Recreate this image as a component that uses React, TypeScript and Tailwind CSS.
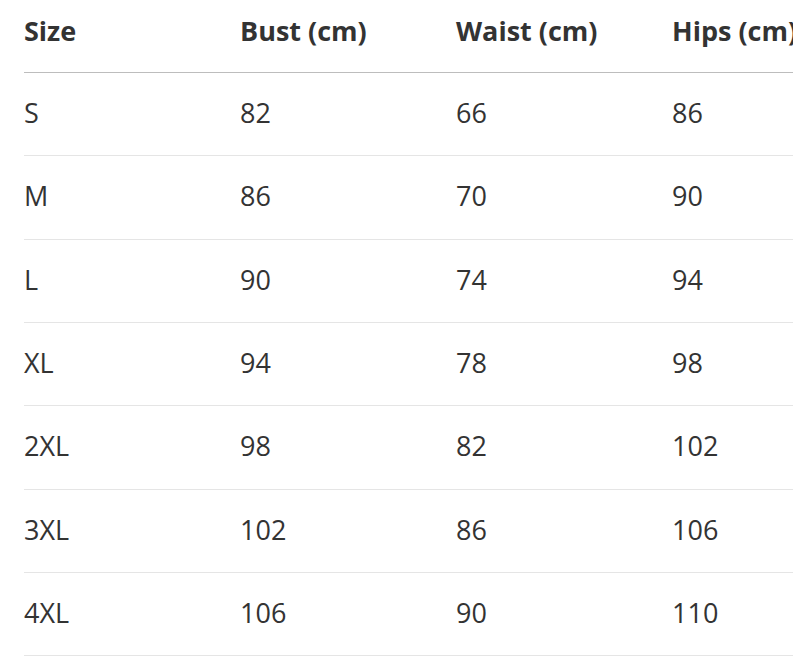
const rows = [
  ["S", "82", "66", "86"],
  ["M", "86", "70", "90"],
  ["L", "90", "74", "94"],
  ["XL", "94", "78", "98"],
  ["2XL", "98", "82", "102"],
  ["3XL", "102", "86", "106"],
  ["4XL", "106", "90", "110"],
];

const headers = ["Size", "Bust (cm)", "Waist (cm)", "Hips (cm)"];

export default function App() {
  return (
    <div className="w-[793px] h-[663px] overflow-hidden bg-white pl-6 text-[#333333] font-['Open_Sans','Noto_Sans',sans-serif]">
      <div className="w-[864px]">
        <div className="grid grid-cols-[216px_216px_216px_216px] h-[73px] border-b border-[#bdbdbd] items-center pb-[10px]">
          {headers.map((h) => (
            <div key={h} className="text-[27px] font-bold whitespace-nowrap">
              {h}
            </div>
          ))}
        </div>
        {rows.map((r) => (
          <div
            key={r[0]}
            className="grid grid-cols-[216px_216px_216px_216px] h-[83.33px] border-b border-[#e5e5e5] items-center pb-[2px]"
          >
            {r.map((c, i) => (
              <div key={i} className="text-[27px] whitespace-nowrap">
                {c}
              </div>
            ))}
          </div>
        ))}
      </div>
    </div>
  );
}
